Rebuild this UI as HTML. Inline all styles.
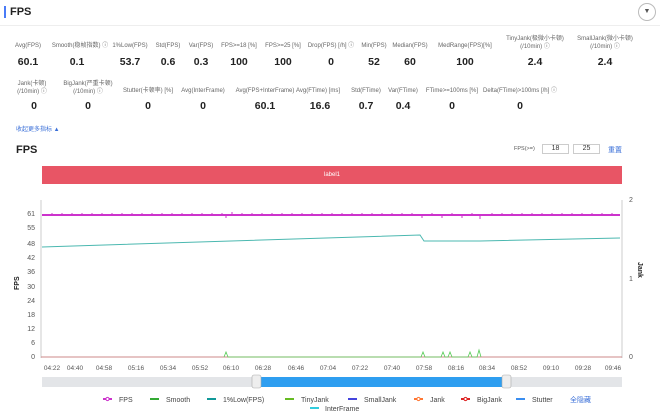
<!DOCTYPE html>
<html><head><meta charset="utf-8"><style>
*{margin:0;padding:0;box-sizing:border-box}
body{width:660px;height:416px;background:#fff;font-family:"Liberation Sans","Noto Sans CJK SC",sans-serif;position:relative;overflow:hidden;color:#333}
.a{position:absolute;white-space:nowrap}
.l{font-size:6px;color:#666;text-align:center;transform:translateX(-50%);line-height:8px}
.v{font-size:10.5px;font-weight:bold;color:#222;transform:translateX(-50%)}
</style></head><body>
<div class="a" style="left:4px;top:6px;width:2px;height:12px;background:#4a7bf7"></div>
<div class="a" style="left:10px;top:6px;font-size:11px;font-weight:bold;color:#222">FPS</div>
<div class="a" style="left:0;top:25px;width:660px;height:1px;background:#eee"></div>
<div class="a" style="left:638px;top:3px;width:18px;height:18px;border:1px solid #bbb;border-radius:50%;font-size:7px;text-align:center;line-height:16px;color:#555">▼</div>

<div class="a l" style="left:28px;top:42px">Avg(FPS)</div><div class="a v" style="left:28px;top:56px">60.1</div>
<div class="a l" style="left:80px;top:42px">Smooth(稳帧指数) ⓘ</div><div class="a v" style="left:77px;top:56px">0.1</div>
<div class="a l" style="left:130px;top:42px">1%Low(FPS)</div><div class="a v" style="left:130px;top:56px">53.7</div>
<div class="a l" style="left:168px;top:42px">Std(FPS)</div><div class="a v" style="left:168px;top:56px">0.6</div>
<div class="a l" style="left:201px;top:42px">Var(FPS)</div><div class="a v" style="left:201px;top:56px">0.3</div>
<div class="a l" style="left:239px;top:42px">FPS&gt;=18 [%]</div><div class="a v" style="left:239px;top:56px">100</div>
<div class="a l" style="left:283px;top:42px">FPS&gt;=25 [%]</div><div class="a v" style="left:283px;top:56px">100</div>
<div class="a l" style="left:331px;top:42px">Drop(FPS) [/h] ⓘ</div><div class="a v" style="left:331px;top:56px">0</div>
<div class="a l" style="left:374px;top:42px">Min(FPS)</div><div class="a v" style="left:374px;top:56px">52</div>
<div class="a l" style="left:410px;top:42px">Median(FPS)</div><div class="a v" style="left:410px;top:56px">60</div>
<div class="a l" style="left:465px;top:42px">MedRange(FPS)[%]</div><div class="a v" style="left:465px;top:56px">100</div>
<div class="a l" style="left:535px;top:35px">TinyJank(极微小卡顿)<br>(/10min) ⓘ</div><div class="a v" style="left:535px;top:56px">2.4</div>
<div class="a l" style="left:605px;top:35px">SmallJank(微小卡顿)<br>(/10min) ⓘ</div><div class="a v" style="left:605px;top:56px">2.4</div>

<div class="a l" style="left:32px;top:80px">Jank(卡顿)<br>(/10min) ⓘ</div><div class="a v" style="left:34px;top:100px">0</div>
<div class="a l" style="left:88px;top:80px">BigJank(严重卡顿)<br>(/10min) ⓘ</div><div class="a v" style="left:88px;top:100px">0</div>
<div class="a l" style="left:148px;top:87px">Stutter(卡顿率) [%]</div><div class="a v" style="left:148px;top:100px">0</div>
<div class="a l" style="left:203px;top:87px">Avg(InterFrame)</div><div class="a v" style="left:203px;top:100px">0</div>
<div class="a l" style="left:265px;top:87px">Avg(FPS+InterFrame)</div><div class="a v" style="left:265px;top:100px">60.1</div>
<div class="a l" style="left:318px;top:87px">Avg(FTime) [ms]</div><div class="a v" style="left:320px;top:100px">16.6</div>
<div class="a l" style="left:366px;top:87px">Std(FTime)</div><div class="a v" style="left:366px;top:100px">0.7</div>
<div class="a l" style="left:403px;top:87px">Var(FTime)</div><div class="a v" style="left:403px;top:100px">0.4</div>
<div class="a l" style="left:452px;top:87px">FTime&gt;=100ms [%]</div><div class="a v" style="left:452px;top:100px">0</div>
<div class="a l" style="left:520px;top:87px">Delta(FTime)&gt;100ms [/h] ⓘ</div><div class="a v" style="left:520px;top:100px">0</div>
<div class="a" style="left:16px;top:124px;font-size:6px;color:#3a6fd8">收起更多指标 ▲</div>

<div class="a" style="left:16px;top:144px;font-size:11px;font-weight:bold;color:#222">FPS</div>
<div class="a" style="left:514px;top:146px;font-size:5.5px;color:#555">FPS(>=)</div>
<div class="a" style="left:542px;top:144px;width:27px;height:10px;border:1px solid #ccc;font-size:7px;text-align:center;line-height:8px">18</div>
<div class="a" style="left:573px;top:144px;width:27px;height:10px;border:1px solid #ccc;font-size:7px;text-align:center;line-height:8px">25</div>
<div class="a" style="left:608px;top:145px;font-size:7px;color:#3a6fd8">重置</div>
<div class="a" style="left:42px;top:166px;width:580px;height:18px;background:#e85565;color:#fff;font-size:6px;text-align:center;line-height:18px">label1</div>

<svg class="a" style="left:0;top:0" width="660" height="416" font-family="Liberation Sans" font-size="7" fill="#555">
<line x1="41" y1="200" x2="41" y2="358" stroke="#ccc"/>
<line x1="622" y1="200" x2="622" y2="358" stroke="#ccc"/>
<g text-anchor="end">
<text x="35" y="216">61</text><text x="35" y="230">55</text><text x="35" y="246">48</text><text x="35" y="260">42</text><text x="35" y="274">36</text><text x="35" y="289">30</text><text x="35" y="303">24</text><text x="35" y="317">18</text><text x="35" y="331">12</text><text x="35" y="345">6</text><text x="35" y="359">0</text>
</g>
<text x="629" y="202">2</text><text x="629" y="281">1</text><text x="629" y="359">0</text>
<text transform="translate(19,290) rotate(-90)" font-weight="bold" fill="#222" font-size="7">FPS</text>
<text transform="translate(638,262) rotate(90)" font-weight="bold" fill="#222" font-size="7">Jank</text>
<line x1="41" y1="357" x2="622" y2="357" stroke="#c88"/>
<polyline fill="none" stroke="#4bb8b0" stroke-width="1" points="42,247 420,235 424,241 480,241 620,238"/>
<polyline fill="none" stroke="#5c5" stroke-width="0.8" points="224,357 226,352 228,357 421,357 423,352 425,357 441,357 443,352 445,357 448,357 450,352 452,357 468,357 470,352 472,357 477,357 479,350 481,357"/>
<line x1="42" y1="215" x2="620" y2="215" stroke="#c3c" stroke-width="2"/>
<g stroke="#c3c" stroke-width="1">
<path d="M52 215v-2M62 215v-2M72 215v-2M82 215v-2M92 215v-2M102 215v-2M112 215v-2M122 215v-2M132 215v-2M142 215v-2M152 215v-2M162 215v-2M172 215v-2M182 215v-2M192 215v-2M202 215v-2M212 215v-2M222 215v-2M232 215v-3M242 215v-2M252 215v-2M262 215v-2M272 215v-2M282 215v-2M292 215v-2M302 215v-2M312 215v-2M322 215v-2M332 215v-2M342 215v-2M352 215v-2M362 215v-2M372 215v-2M382 215v-2M392 215v-2M402 215v-2M412 215v-2M422 215v3M432 215v-2M442 215v3M452 215v-2M462 215v3M472 215v-2M480 215v4M492 215v-2M502 215v-2M512 215v-2M522 215v-2M532 215v-2M542 215v-2M552 215v-2M562 215v-2M572 215v-2M582 215v-2M592 215v-2M602 215v-2M612 215v-2M226 215v3"/>
</g>
<g text-anchor="middle" font-size="6.5">
<text x="52" y="370">04:22</text><text x="75" y="370">04:40</text><text x="104" y="370">04:58</text><text x="136" y="370">05:16</text><text x="168" y="370">05:34</text><text x="200" y="370">05:52</text><text x="231" y="370">06:10</text><text x="263" y="370">06:28</text><text x="296" y="370">06:46</text><text x="328" y="370">07:04</text><text x="360" y="370">07:22</text><text x="392" y="370">07:40</text><text x="424" y="370">07:58</text><text x="456" y="370">08:16</text><text x="487" y="370">08:34</text><text x="519" y="370">08:52</text><text x="551" y="370">09:10</text><text x="583" y="370">09:28</text><text x="613" y="370">09:46</text>
</g>
<rect x="42" y="377" width="580" height="10" fill="#e3e5e8"/>
<rect x="258" y="377" width="247" height="10" fill="#2e9ef0"/>
<rect x="252" y="375" width="9" height="13" rx="2" fill="#eee" stroke="#aaa" stroke-width="0.6"/>
<rect x="502" y="375" width="9" height="13" rx="2" fill="#eee" stroke="#aaa" stroke-width="0.6"/>
<g font-size="7" fill="#444">
<line x1="103" y1="399" x2="112" y2="399" stroke="#c3c" stroke-width="2"/><circle cx="107.5" cy="399" r="1.6" fill="#fff" stroke="#c3c"/><text x="119" y="402">FPS</text>
<line x1="150" y1="399" x2="159" y2="399" stroke="#3a3" stroke-width="2"/><text x="166" y="402">Smooth</text>
<line x1="207" y1="399" x2="216" y2="399" stroke="#199" stroke-width="2"/><text x="223" y="402">1%Low(FPS)</text>
<line x1="285" y1="399" x2="294" y2="399" stroke="#6b2" stroke-width="2"/><text x="301" y="402">TinyJank</text>
<line x1="348" y1="399" x2="357" y2="399" stroke="#44d" stroke-width="2"/><text x="364" y="402">SmallJank</text>
<line x1="414" y1="399" x2="423" y2="399" stroke="#f73" stroke-width="2"/><circle cx="418.5" cy="399" r="1.6" fill="#fff" stroke="#f73"/><text x="430" y="402">Jank</text>
<line x1="461" y1="399" x2="470" y2="399" stroke="#d22" stroke-width="2"/><circle cx="465.5" cy="399" r="1.6" fill="#fff" stroke="#d22"/><text x="477" y="402">BigJank</text>
<line x1="516" y1="399" x2="525" y2="399" stroke="#3a8ef0" stroke-width="2"/><text x="532" y="402">Stutter</text>
<text x="570" y="402" fill="#3a6fd8" font-family="Noto Sans CJK SC">全隐藏</text>
<line x1="310" y1="408" x2="319" y2="408" stroke="#3cd" stroke-width="2"/><text x="325" y="411">InterFrame</text>
</g>
</svg>
</body></html>
